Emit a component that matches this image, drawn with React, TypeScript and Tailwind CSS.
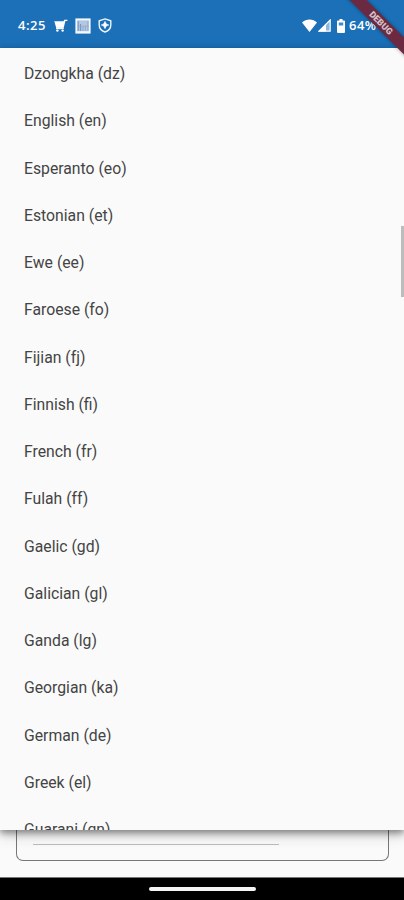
import React from "react";

const LANGUAGES = [
  "Dzongkha (dz)",
  "English (en)",
  "Esperanto (eo)",
  "Estonian (et)",
  "Ewe (ee)",
  "Faroese (fo)",
  "Fijian (fj)",
  "Finnish (fi)",
  "French (fr)",
  "Fulah (ff)",
  "Gaelic (gd)",
  "Galician (gl)",
  "Ganda (lg)",
  "Georgian (ka)",
  "German (de)",
  "Greek (el)",
  "Guarani (gn)",
];

function CartIcon() {
  return (
    <svg width='14' height='14' viewBox='0 0 14 14' fill='white'>
      <path d='M0.3 2.2H9.4L10.4 0.8H13.4V2.1H11.4L9.8 8.4H2.1Z' />
      <path d='M2.1 8.2H9.7V10.2H2.1Z' />
      <circle cx='3.4' cy='11.6' r='1.2' />
      <circle cx='8.6' cy='11.6' r='1.2' />
    </svg>
  );
}

function NewsIcon() {
  return (
    <svg width='16' height='16' viewBox='0 0 16 16'>
      <rect x='0.4' y='0.4' width='15.2' height='15.2' fill='#f4f7fb' />
      <rect x='2.2' y='2.4' width='11.6' height='10.8' fill='#b4c7e1' />
      <path d='M3.2 3V13M5.6 6V13' stroke='#6f93c4' strokeWidth='1' />
      <path d='M8 8.5V13M10.4 8.5V13M12.9 3V13' stroke='#8aa8d0' strokeWidth='0.9' />
      <path d='M2.2 8.2H13.8' stroke='#8aa8d0' strokeWidth='0.7' />
    </svg>
  );
}

function ShieldIcon() {
  return (
    <svg width='14' height='15' viewBox='0 0 14 15'>
      <path
        d='M7 0.9L12.8 2.8V7C12.8 10.2 10.6 12.8 7 14C3.4 12.8 1.2 10.2 1.2 7V2.8Z'
        fill='none'
        stroke='#eef5fb'
        strokeWidth='1.4'
      />
      <path d='M7 3.3L8.3 5.9L10.8 7L8.3 8.1L7 10.7L5.7 8.1L3.2 7L5.7 5.9Z' fill='white' stroke='white' strokeWidth='0.6' />
    </svg>
  );
}

function WifiIcon() {
  return (
    <svg width='15' height='13' viewBox='0 0 15 13' fill='white'>
      <path d='M0 3.6C4.1 -0.5 10.9 -0.5 15 3.6L7.5 13Z' />
    </svg>
  );
}

function SignalIcon() {
  return (
    <svg width='13' height='13' viewBox='0 0 13 13'>
      <path d='M12.2 1V12.2H1Z' fill='#8db7dc' stroke='white' strokeWidth='1.2' />
      <path d='M8 5V12.6H0.6Z' fill='white' />
    </svg>
  );
}

function BatteryIcon() {
  return (
    <svg width='8' height='14' viewBox='0 0 8 14'>
      <path d='M2.5 0H5.5V1.5H7Q8 1.5 8 2.5V13Q8 14 7 14H1Q0 14 0 13V2.5Q0 1.5 1 1.5H2.5Z' fill='white' />
      <rect x='1.8' y='3.5' width='4.4' height='3' fill='#4389c6' />
    </svg>
  );
}

function StatusBar() {
  return (
    <div className='flex h-12 shrink-0 items-center bg-[#1b70b8] pt-[3px] pl-[18px] text-white'>
      <span className="w-[36px] pb-px font-['Open_Sans',sans-serif] text-[13px] leading-4 font-semibold tracking-[0.5px]">
        4:25
      </span>
      <CartIcon />
      <div className='ml-[7px]'>
        <NewsIcon />
      </div>
      <div className='ml-[7px]'>
        <ShieldIcon />
      </div>
      <div className='ml-auto flex w-[102px] items-center'>
        <WifiIcon />
        <div className='ml-px'>
          <SignalIcon />
        </div>
        <div className='ml-[6px]'>
          <BatteryIcon />
        </div>
        <span className="ml-1 pb-px font-['Open_Sans',sans-serif] text-[13px] leading-4 font-semibold tracking-[0.5px]">
          64%
        </span>
      </div>
    </div>
  );
}

export default function App() {
  return (
    <div className="relative flex h-[900px] w-[404px] flex-col overflow-hidden bg-[#fafafa] font-['Roboto','Noto_Sans',sans-serif]">
      <StatusBar />
      <div className='relative z-10 h-[782px] shrink-0 overflow-hidden bg-[#fafafa] shadow-[0_3px_7px_rgba(0,0,0,0.42),0_5px_14px_rgba(0,0,0,0.16)]'>
        <ul className='pt-[2.4px]'>
          {LANGUAGES.map((language) => (
            <li
              key={language}
              className='flex h-[47.25px] items-center pl-6 text-[15.75px] text-[#444444]'
            >
              {language}
            </li>
          ))}
        </ul>
        <div className='absolute top-[178px] right-0 h-[71px] w-[3px] bg-[#bcbcbc]' />
      </div>
      <div className='mr-[15px] ml-4 h-[31px] shrink-0 rounded-b-[7px] border border-t-0 border-[#777777] px-4'>
        <div className='h-[15px] w-[246px] border-b border-[#bdbdbd]' />
      </div>
      <div className='mt-auto flex h-[23px] shrink-0 items-center justify-center border-t border-[#777777] bg-black'>
        <div className='h-1 w-[107px] rounded-full bg-[#f4f4f4]' />
      </div>
      {/* corner ribbon lies over the status bar */}
      <div className='absolute top-[17px] left-[321px] z-20 flex h-3 w-[120px] rotate-45 items-center justify-center bg-[#6c2a42] shadow-[0_0_4px_rgba(0,0,0,0.4)]'>
        <span className='text-[9px] leading-3 font-black text-[#d5c0c6]'>DEBUG</span>
      </div>
    </div>
  );
}
